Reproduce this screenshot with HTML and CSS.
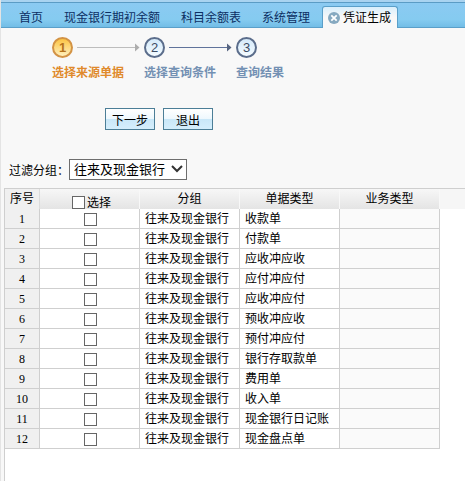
FILE: index.html
```html
<!DOCTYPE html>
<html lang="zh-CN">
<head>
    <meta charset="UTF-8">
    <meta name="viewport" content="width=device-width, initial-scale=1.0">
    <title>凭证生成</title>
    <link rel="stylesheet" href="styles.css">
</head>
<body>
    <nav class="tabs">
        <a class="tab" href="#">首页</a>
        <a class="tab" href="#">现金银行期初余额</a>
        <a class="tab" href="#">科目余额表</a>
        <a class="tab" href="#">系统管理</a>
        <div class="tab active">
            <button type="button" class="tab-close" aria-label="关闭">
                <svg width="12" height="12" viewBox="0 0 12 12">
                    <circle cx="6" cy="6" r="6" fill="#86a9c0"/>
                    <path d="M3.3 3.3L8.7 8.7M8.7 3.3L3.3 8.7" stroke="#fff" stroke-width="1.8"/>
                </svg>
            </button>
            <a href="#">凭证生成</a>
        </div>
    </nav>

    <main>
        <ol class="steps">
            <li class="step current">
                <div class="step-head">
                    <span class="step-no">1</span>
                    <svg class="arrow" width="63" height="9" viewBox="0 0 63 9">
                        <path d="M0 4.5H59" stroke="#bdbdbd"/>
                        <path d="M58 0.5L62.5 4.5L58 8.5Z" fill="#adadad"/>
                    </svg>
                </div>
                <div class="step-name">选择来源单据</div>
            </li>
            <li class="step">
                <div class="step-head">
                    <span class="step-no">2</span>
                    <svg class="arrow" width="63" height="9" viewBox="0 0 63 9">
                        <path d="M0 4.5H59" stroke="#60739b"/>
                        <path d="M58 0.5L62.5 4.5L58 8.5Z" fill="#566480"/>
                    </svg>
                </div>
                <div class="step-name">选择查询条件</div>
            </li>
            <li class="step">
                <div class="step-head">
                    <span class="step-no">3</span>
                </div>
                <div class="step-name">查询结果</div>
            </li>
        </ol>

        <div class="buttons">
            <button type="button">下一步</button>
            <button type="button">退出</button>
        </div>

        <div class="filter">
            <label for="group">过滤分组：</label>
            <div class="select-box">
                <select id="group">
                    <option>往来及现金银行</option>
                </select>
                <svg width="12" height="8" viewBox="0 0 12 8">
                    <path d="M1 1L6 6L11 1" fill="none" stroke="#333" stroke-width="2"/>
                </svg>
            </div>
        </div>

        <div class="grid">
            <table>
                <thead>
                    <tr>
                        <th class="no">序号</th>
                        <th class="col check"><input type="checkbox" id="check-all"><label for="check-all">选择</label></th>
                        <th class="col">分组</th>
                        <th class="col">单据类型</th>
                        <th class="col">业务类型</th>
                        <th class="rest"></th>
                    </tr>
                </thead>
                <tbody>
                    <tr><td class="no">1</td><td class="check"><input type="checkbox" aria-label="选择1"></td><td>往来及现金银行</td><td>收款单</td><td class="biz"></td></tr>
                    <tr><td class="no">2</td><td class="check"><input type="checkbox" aria-label="选择2"></td><td>往来及现金银行</td><td>付款单</td><td class="biz"></td></tr>
                    <tr><td class="no">3</td><td class="check"><input type="checkbox" aria-label="选择3"></td><td>往来及现金银行</td><td>应收冲应收</td><td class="biz"></td></tr>
                    <tr><td class="no">4</td><td class="check"><input type="checkbox" aria-label="选择4"></td><td>往来及现金银行</td><td>应付冲应付</td><td class="biz"></td></tr>
                    <tr><td class="no">5</td><td class="check"><input type="checkbox" aria-label="选择5"></td><td>往来及现金银行</td><td>应收冲应付</td><td class="biz"></td></tr>
                    <tr><td class="no">6</td><td class="check"><input type="checkbox" aria-label="选择6"></td><td>往来及现金银行</td><td>预收冲应收</td><td class="biz"></td></tr>
                    <tr><td class="no">7</td><td class="check"><input type="checkbox" aria-label="选择7"></td><td>往来及现金银行</td><td>预付冲应付</td><td class="biz"></td></tr>
                    <tr><td class="no">8</td><td class="check"><input type="checkbox" aria-label="选择8"></td><td>往来及现金银行</td><td>银行存取款单</td><td class="biz"></td></tr>
                    <tr><td class="no">9</td><td class="check"><input type="checkbox" aria-label="选择9"></td><td>往来及现金银行</td><td>费用单</td><td class="biz"></td></tr>
                    <tr><td class="no">10</td><td class="check"><input type="checkbox" aria-label="选择10"></td><td>往来及现金银行</td><td>收入单</td><td class="biz"></td></tr>
                    <tr><td class="no">11</td><td class="check"><input type="checkbox" aria-label="选择11"></td><td>往来及现金银行</td><td>现金银行日记账</td><td class="biz"></td></tr>
                    <tr><td class="no">12</td><td class="check"><input type="checkbox" aria-label="选择12"></td><td>往来及现金银行</td><td>现金盘点单</td><td class="biz"></td></tr>
                </tbody>
            </table>
        </div>
    </main>
</body>
</html>
```
FILE: styles.css
```css
* {
    box-sizing: border-box;
}
body {
    margin: 0;
    min-height: 100vh;
    display: flex;
    flex-direction: column;
    border-left: 1px solid #e4e4e4;
    background-color: #f8f8f8;
    font-family: "Liberation Sans", "Noto Sans CJK SC", sans-serif;
    font-size: 12px;
    line-height: 18px;
    color: #000;
}
button, select {
    font-family: inherit;
    color: inherit;
}

/* 顶部标签页 */
.tabs {
    display: flex;
    align-items: flex-end;
    height: 28px;
    padding-left: 8px;
    border-top: 2px solid #a9d3f0;
    border-bottom: 1px solid #5a9fc9;
    background: linear-gradient(#5b9cc5 1px, #8bcaf2 1px, #85cbf0 70%, #72bde6);
    white-space: nowrap;
}
.tab {
    display: flex;
    align-items: center;
    height: 21px;
    padding: 2px 10px 0;
    margin-right: 1px;
    color: #0d2f63;
    text-decoration: none;
}
.tab.active {
    height: 22px;
    padding: 1px 6px 0 5px;
    margin: 0 0 -1px 1px;
    border: 1px solid #5a9fc9;
    border-bottom: none;
    border-radius: 3px 3px 0 0;
    background: linear-gradient(#d9effc, #f8f8f8 50%);
}
.tab.active a {
    color: #000;
    text-decoration: none;
}
.tab-close {
    display: flex;
    padding: 0;
    margin-right: 3px;
    border: none;
    background: none;
    cursor: pointer;
}

main {
    flex: 1;
    display: flex;
    flex-direction: column;
}

/* 步骤 */
.steps {
    display: flex;
    margin: 0;
    padding: 9px 0 0 51px;
    list-style: none;
}
.step {
    width: 92px;
    color: #7390b3;
}
.step-head {
    display: flex;
    align-items: center;
    gap: 4px;
}
.step-no {
    flex: none;
    width: 21px;
    height: 21px;
    border: 2px solid #5b6d8b;
    border-radius: 50%;
    background: linear-gradient(#d5eafa, #f4fbff);
    color: #3d4b63;
    font-size: 13px;
    line-height: 17px;
    text-align: center;
}
.step-name {
    margin-top: 6px;
    font-weight: bold;
    white-space: nowrap;
}
.step.current {
    color: #e08a2c;
}
.current .step-no {
    border-color: #d39345;
    background: linear-gradient(#fbc444, #fff0bd);
    color: #b5721b;
    font-weight: bold;
}

.buttons {
    display: flex;
    gap: 8px;
    margin: 26px 0 0 104px;
}
.buttons button {
    width: 50px;
    height: 22px;
    padding: 0;
    border: 1px solid #4c7e97;
    background: linear-gradient(#fff, #eef8fe 50%, #c9e7f8 50%, #d5eefc);
    font-size: 12px;
    cursor: pointer;
}

/* 过滤条件 */
.filter {
    display: flex;
    align-items: center;
    margin: 28px 0 8px 8px;
}
.filter label {
    width: 60px;
    padding-top: 4px;
    white-space: nowrap;
}
.select-box {
    display: grid;
    align-items: center;
}
.select-box select,
.select-box svg {
    grid-area: 1 / 1;
}
.select-box select {
    appearance: none;
    width: 118px;
    height: 21px;
    padding: 0 4px;
    border: 1px solid #6e6e6e;
    border-radius: 0;
    background-color: #fff;
    font-size: 13px;
}
.select-box svg {
    justify-self: end;
    margin-right: 4px;
    pointer-events: none;
}

/* 表格 */
.grid {
    flex: 1;
    margin-left: 3px;
    border-top: 1px solid #cfcfcf;
    border-left: 1px solid #cfcfcf;
    background-color: #fff;
}
.grid table {
    width: 100%;
    table-layout: fixed;
    border-spacing: 0;
}
.grid th {
    height: 20px;
    padding: 0;
    border-right: 1px solid #f8f8f8;
    background: linear-gradient(#f7f7f7, #e4e4e4);
    font-weight: normal;
}
.grid th.no {
    width: 35px;
    border-right-color: #dcdcdc;
    background: #f0f0f0;
}
.grid th.col {
    width: 100px;
}
.grid th.rest {
    border: none;
    background: #f6f6f6;
}
.grid td {
    height: 20px;
    padding: 0 5px;
    border-right: 1px solid #cfcfcf;
    border-bottom: 1px solid #cfcfcf;
    white-space: nowrap;
}
.grid td.no {
    padding: 0;
    background-color: #f0f0f0;
    font-family: "Liberation Serif", serif;
    text-align: center;
}
.grid td.biz {
    background-color: #fafafa;
}
.grid .check {
    text-align: center;
    line-height: 0;
}
.grid td.check {
    padding: 2px 4px 0 6px;
}
.grid th.check {
    vertical-align: bottom;
}
.grid th.check label {
    line-height: 12px;
}
.grid input {
    appearance: none;
    width: 13px;
    height: 13px;
    margin: 0;
    border: 1px solid #666;
    background-color: #fff;
    vertical-align: middle;
}
.grid th input {
    margin: 0 2px 0 4px;
}
.grid th label {
    vertical-align: middle;
}
```
